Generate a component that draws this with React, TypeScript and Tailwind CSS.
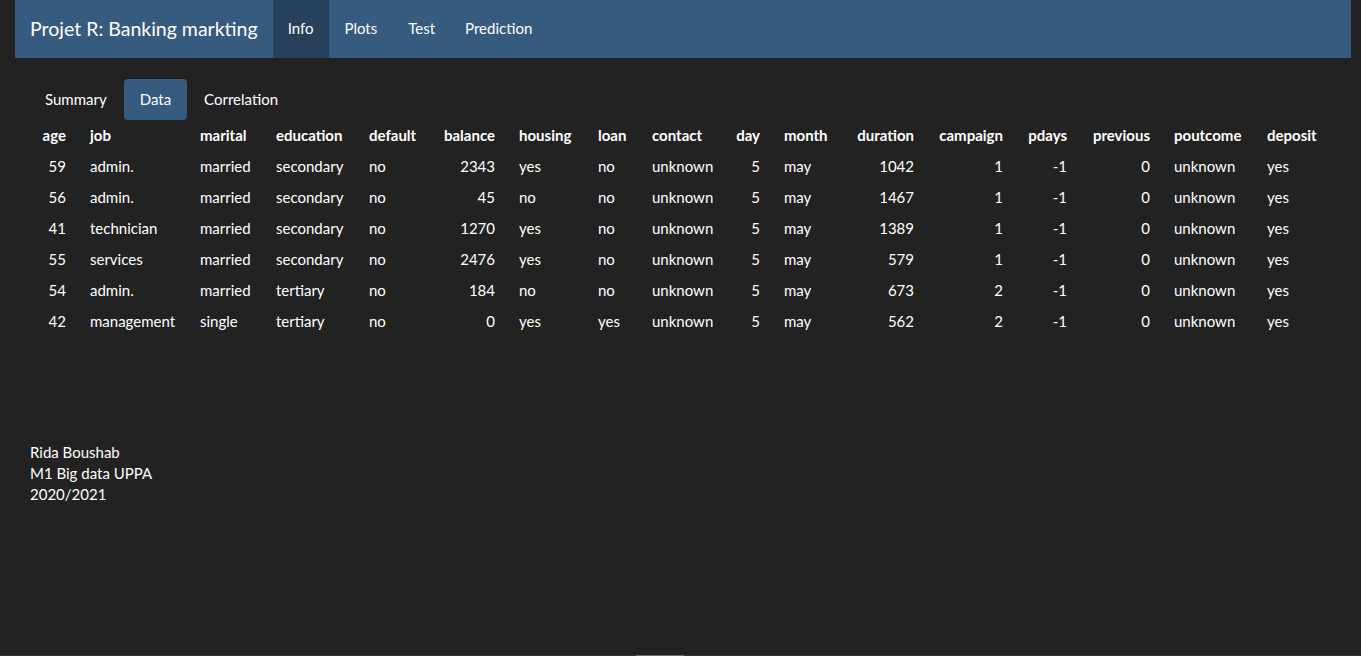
const columns = [
  { name: "age", num: true, w: "w-[48px]" },
  { name: "job", num: false, w: "w-[110px]" },
  { name: "marital", num: false, w: "w-[76px]" },
  { name: "education", num: false, w: "w-[93px]" },
  { name: "default", num: false, w: "w-[73px]" },
  { name: "balance", num: true, w: "w-[77px]" },
  { name: "housing", num: false, w: "w-[79px]" },
  { name: "loan", num: false, w: "w-[54px]" },
  { name: "contact", num: false, w: "w-[83px]" },
  { name: "day", num: true, w: "w-[49px]" },
  { name: "month", num: false, w: "w-[70px]" },
  { name: "duration", num: true, w: "w-[84px]" },
  { name: "campaign", num: true, w: "w-[89px]" },
  { name: "pdays", num: true, w: "w-[64px]" },
  { name: "previous", num: true, w: "w-[83px]" },
  { name: "poutcome", num: false, w: "w-[93px]" },
  { name: "deposit", num: false, w: "w-[75px]" },
];

const rows = [
  ["59", "admin.", "married", "secondary", "no", "2343", "yes", "no", "unknown", "5", "may", "1042", "1", "-1", "0", "unknown", "yes"],
  ["56", "admin.", "married", "secondary", "no", "45", "no", "no", "unknown", "5", "may", "1467", "1", "-1", "0", "unknown", "yes"],
  ["41", "technician", "married", "secondary", "no", "1270", "yes", "no", "unknown", "5", "may", "1389", "1", "-1", "0", "unknown", "yes"],
  ["55", "services", "married", "secondary", "no", "2476", "yes", "no", "unknown", "5", "may", "579", "1", "-1", "0", "unknown", "yes"],
  ["54", "admin.", "married", "tertiary", "no", "184", "no", "no", "unknown", "5", "may", "673", "2", "-1", "0", "unknown", "yes"],
  ["42", "management", "single", "tertiary", "no", "0", "yes", "yes", "unknown", "5", "may", "562", "2", "-1", "0", "unknown", "yes"],
];

const App = () => {
  return (
    <div className="min-h-[656px] flex flex-col bg-[#222222] text-white text-[15px] font-['Lato',sans-serif] leading-[21px]">
      <div className="pl-[15px] pr-[10px]">
        <nav className="flex items-stretch h-[58px] bg-[#375a7f]">
          <div className="flex items-center px-[15px] pb-[1px] text-[19.5px]">Projet R: Banking markting</div>
          <div className="flex items-stretch">
            <div className="flex items-center px-[15px] pb-[1px] bg-[#28415b]">Info</div>
            <div className="flex items-center px-[16px] pb-[1px]">Plots</div>
            <div className="flex items-center px-[15px] pb-[1px]">Test</div>
            <div className="flex items-center px-[15px] pb-[1px]">Prediction</div>
          </div>
        </nav>
      </div>

      <div className="flex-1 px-[30px] pt-[21px]">
        <div className="flex gap-[2px]">
          <div className="px-[15px] py-[10px] rounded-[4px]">Summary</div>
          <div className="px-[16px] py-[10px] rounded-[4px] bg-[#375a7f]">Data</div>
          <div className="px-[15px] py-[10px] rounded-[4px]">Correlation</div>
        </div>

        <table className="border-collapse table-fixed w-[1300px]">
          <thead>
            <tr>
              {columns.map((c) => (
                <th
                  key={c.name}
                  className={`${c.w} px-[12px] py-[5px] font-bold ${c.num ? "text-right" : "text-left"}`}
                >
                  {c.name}
                </th>
              ))}
            </tr>
          </thead>
          <tbody>
            {rows.map((r, i) => (
              <tr key={i}>
                {r.map((v, j) => (
                  <td
                    key={j}
                    className={`px-[12px] py-[5px] whitespace-nowrap ${columns[j].num ? "text-right" : "text-left"}`}
                  >
                    {v}
                  </td>
                ))}
              </tr>
            ))}
          </tbody>
        </table>

        <div className="mt-[105px]">
          <p>Rida Boushab</p>
          <p>M1 Big data UPPA</p>
          <p>2020/2021</p>
        </div>
      </div>

      <div className="flex h-[1px] bg-[#2a3640]">
        <div className="ml-[636px] w-[48px] bg-[#6b6b6b]" />
      </div>
    </div>
  );
};

export default App;
